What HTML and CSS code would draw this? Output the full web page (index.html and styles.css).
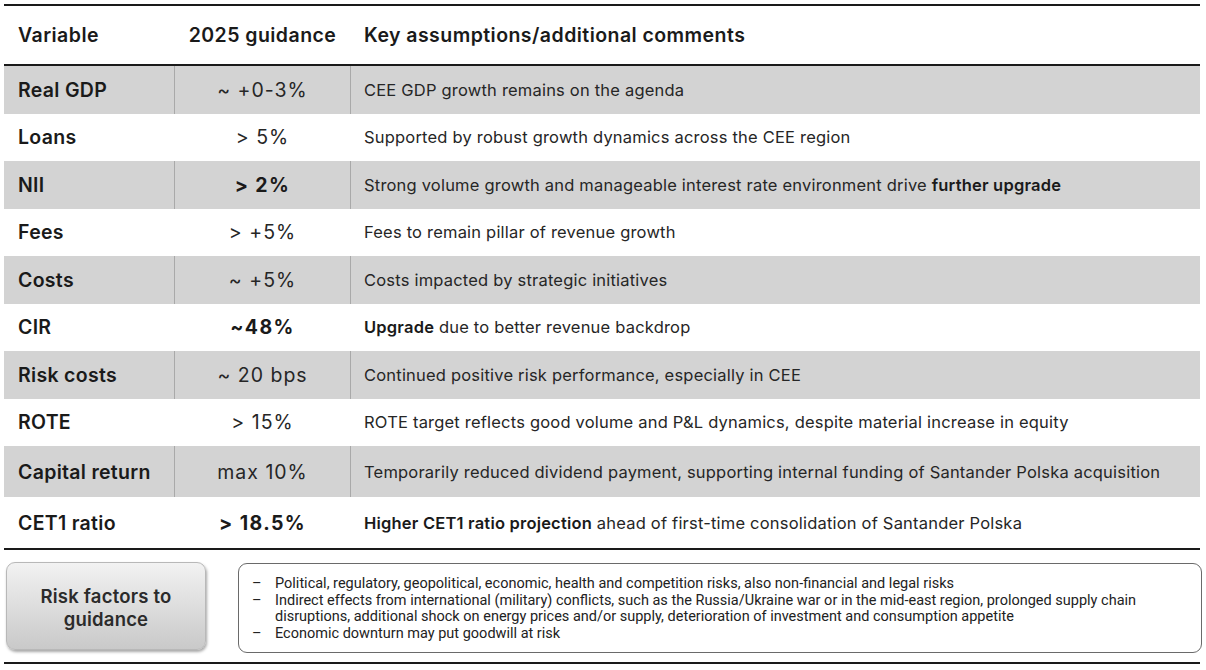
FILE: index.html
```html
<!DOCTYPE html>
<html>
<head>
<meta charset="utf-8">
<link rel="stylesheet" href="styles.css">
</head>
<body>
<div class="page">
  <div class="table">
    <div class="row head">
      <div class="c1"><span>Variable</span></div>
      <div class="c2"><span>2025 guidance</span></div>
      <div class="c3"><span>Key assumptions/additional comments</span></div>
    </div>
    <div class="row gray">
      <div class="c1"><span>Real GDP</span></div>
      <div class="c2"><span>~ +0-3%</span></div>
      <div class="c3"><span>CEE GDP growth remains on the agenda</span></div>
    </div>
    <div class="row">
      <div class="c1"><span>Loans</span></div>
      <div class="c2"><span>&gt; 5%</span></div>
      <div class="c3"><span>Supported by robust growth dynamics across the CEE region</span></div>
    </div>
    <div class="row gray">
      <div class="c1"><span>NII</span></div>
      <div class="c2"><b>&gt; 2%</b></div>
      <div class="c3"><span>Strong volume growth and manageable interest rate environment drive <b>further upgrade</b></span></div>
    </div>
    <div class="row">
      <div class="c1"><span>Fees</span></div>
      <div class="c2"><span>&gt; +5%</span></div>
      <div class="c3"><span>Fees to remain pillar of revenue growth</span></div>
    </div>
    <div class="row gray">
      <div class="c1"><span>Costs</span></div>
      <div class="c2"><span>~ +5%</span></div>
      <div class="c3"><span>Costs impacted by strategic initiatives</span></div>
    </div>
    <div class="row">
      <div class="c1"><span>CIR</span></div>
      <div class="c2"><b>~48%</b></div>
      <div class="c3"><span><b>Upgrade</b> due to better revenue backdrop</span></div>
    </div>
    <div class="row gray">
      <div class="c1"><span>Risk costs</span></div>
      <div class="c2"><span>~ 20 bps</span></div>
      <div class="c3"><span>Continued positive risk performance, especially in CEE</span></div>
    </div>
    <div class="row">
      <div class="c1"><span>ROTE</span></div>
      <div class="c2"><span>&gt; 15%</span></div>
      <div class="c3"><span>ROTE target reflects good volume and P&amp;L dynamics, despite material increase in equity</span></div>
    </div>
    <div class="row gray tall">
      <div class="c1"><span>Capital return</span></div>
      <div class="c2"><span>max 10%</span></div>
      <div class="c3"><span>Temporarily reduced dividend payment, supporting internal funding of Santander Polska acquisition</span></div>
    </div>
    <div class="row tall">
      <div class="c1"><span>CET1 ratio</span></div>
      <div class="c2"><b>&gt; 18.5%</b></div>
      <div class="c3"><span><b>Higher CET1 ratio projection</b> ahead of first-time consolidation of Santander Polska</span></div>
    </div>
  </div>
  <div class="risk">
    <div class="risk-label">Risk factors to<br>guidance</div>
    <ul class="risk-list">
      <li>Political, regulatory, geopolitical, economic, health and competition risks, also non-financial and legal risks</li>
      <li>Indirect effects from international (military) conflicts, such as the Russia/Ukraine war or in the mid-east region, prolonged supply chain disruptions, additional shock on energy prices and/or supply, deterioration of investment and consumption appetite</li>
      <li>Economic downturn may put goodwill at risk</li>
    </ul>
  </div>
  <div class="bottom-rule"></div>
</div>
</body>
</html>
```
FILE: styles.css
```css
html, body {
  margin: 0;
  padding: 0;
  background: #ffffff;
}
body {
  font-family: Inter, "Noto Sans", sans-serif;
  color: #1e1e1e;
  width: 1206px;
  height: 670px;
  overflow: hidden;
}
.page {
  padding-top: 4px;
}
.table {
  margin-left: 4px;
  width: 1196px;
  border-top: 2px solid #1a1a1a;
  border-bottom: 2px solid #1a1a1a;
}
.row {
  display: grid;
  grid-template-columns: 170px 177px 1fr;
  height: 47.5px;
  align-items: stretch;
}
.row > div {
  display: flex;
  align-items: center;
  white-space: nowrap;
}
.row.tall {
  height: 51px;
}
.gray {
  background: #d3d3d3;
}
.c1 {
  padding-left: 14px;
  font-size: 19.5px;
  letter-spacing: 0.3px;
  font-weight: 600;
  color: #1a1a1a;
}
.c2 {
  justify-content: center;
  font-size: 19.5px;
  letter-spacing: 1px;
  color: #262626;
}
.c2 b {
  font-weight: 700;
  letter-spacing: 1.4px;
  color: #1a1a1a;
}
.c3 {
  padding-left: 13px;
  font-size: 16.5px;
  letter-spacing: 0.2px;
  color: #262626;
}
.c3 b {
  font-weight: 600;
  color: #1a1a1a;
}
.gray .c2 {
  border-left: 1px solid #a9a9a9;
  border-right: 1px solid #a9a9a9;
}
.row.head {
  height: 58px;
  border-bottom: 2px solid #1a1a1a;
}
.row.head > div {
  font-size: 19.5px;
  font-weight: 600;
  letter-spacing: 0.45px;
  color: #1a1a1a;
}
.risk {
  display: flex;
  align-items: flex-start;
  margin-top: 12px;
  padding-left: 6px;
  gap: 32px;
}
.risk-label {
  width: 200px;
  height: 88px;
  box-sizing: border-box;
  padding-top: 3px;
  border: 1px solid #b8b8b8;
  border-radius: 9px;
  background: linear-gradient(#f2f2f2, #c9c9c9);
  box-shadow: 1px 2px 3px rgba(0,0,0,0.35);
  display: flex;
  align-items: center;
  justify-content: center;
  text-align: center;
  font-size: 18.5px;
  letter-spacing: 0.2px;
  font-weight: 600;
  line-height: 23px;
  color: #2b2b2b;
}
.risk-list {
  margin: 1px 0 0 0;
  width: 964px;
  height: 90px;
  box-sizing: border-box;
  border: 1px solid #6a6a6a;
  border-radius: 9px;
  list-style: none;
  padding: 12px 40px 0 36px;
  font-family: Roboto, "Liberation Sans", sans-serif;
  font-size: 14.5px;
  line-height: 16.5px;
  color: #222;
}
.risk-list li {
  position: relative;
}
.risk-list li::before {
  content: "\2013";
  position: absolute;
  left: -23px;
}
.bottom-rule {
  margin: 9px 0 0 4px;
  width: 1196px;
  height: 2px;
  background: #1a1a1a;
}
```
